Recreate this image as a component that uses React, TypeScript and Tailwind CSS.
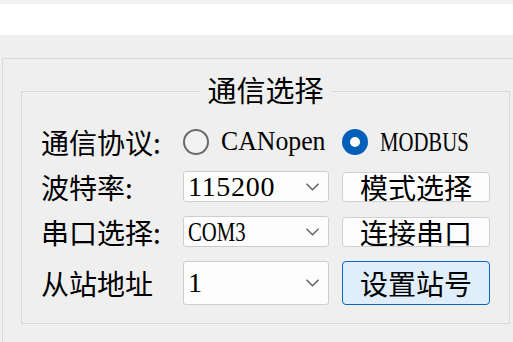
const cjk = "font-['Noto_Sans_CJK_SC',sans-serif]";
const latin = "font-['Liberation_Serif','Noto_Sans_CJK_SC',serif]";

function Radio({ checked }: { checked: boolean }) {
  if (checked) {
    return (
      <span className="flex h-[26px] w-[26px] shrink-0 items-center justify-center rounded-full bg-[#005fb8]">
        <span className="h-[10px] w-[10px] rounded-full bg-white" />
      </span>
    );
  }
  return <span className="h-[26px] w-[26px] shrink-0 rounded-full border-2 border-[#6a6a6a] bg-[#f2f2f2]" />;
}

function Chevron() {
  return (
    <svg width="13" height="8" viewBox="0 0 13 8" fill="none" className="shrink-0">
      <path d="M0.5 0.8 L6.5 6.8 L12.5 0.8" stroke="#5c5c5c" strokeWidth="1.3" />
    </svg>
  );
}

function Select({ value, fit, tall }: { value: string; fit: string; tall?: boolean }) {
  return (
    <div
      className={`flex w-[146px] shrink-0 items-center justify-between rounded-[3px] border border-[#cdcdcd] bg-[#fdfdfd] pl-[4px] pr-[9px] ${tall ? "h-[44px]" : "h-[31px]"}`}
    >
      <span className={`inline-block origin-left ${latin} text-[28px] leading-none text-black ${fit}`}>{value}</span>
      <Chevron />
    </div>
  );
}

function Button({ label, primary, tall }: { label: string; primary?: boolean; tall?: boolean }) {
  return (
    <button
      className={`ml-[13px] flex w-[148px] shrink-0 items-center justify-center rounded-[4px] border ${cjk} text-[28px] leading-none text-black ${
        primary ? "border-[#0067c0] bg-[#e0eef9]" : "border-[#d0d0d0] bg-[#fdfdfd]"
      } ${tall ? "h-[44px]" : "h-[30px]"}`}
    >
      {label}
    </button>
  );
}

function Label({ text }: { text: string }) {
  return <span className={`w-[142px] shrink-0 ${cjk} text-[28px] leading-none text-black`}>{text}</span>;
}

export default function App() {
  return (
    <div className="h-[342px] w-[513px] overflow-hidden bg-[#efefef]">
      <div className="h-[4px] bg-[#f2f2f2]" />
      <div className="h-[31px] bg-white" />

      <div className="pt-[23px]">
        {/* outer group box, runs past the window edge */}
        <div className="ml-[2px] h-[400px] w-[560px] border border-[#d9d9d9] pl-[18px] pt-[32px]">
          {/* inner group box */}
          <div className="relative h-[233px] w-[489px] border border-[#d9d9d9] pl-[19px] pt-[34px]">
            <span
              className={`absolute left-1/2 top-[-19px] -translate-x-1/2 bg-[#efefef] px-[8px] ${cjk} text-[29px] leading-[32px] text-black`}
            >
              通信选择
            </span>

            <div className="flex h-[31px] items-center">
              <Label text="通信协议:" />
              <Radio checked={false} />
              <span className="ml-[12px] w-[121px] shrink-0">
                <span
                  className={`inline-block origin-left [transform:scaleX(0.92)] ${latin} text-[28px] leading-none text-black`}
                >
                  CANopen
                </span>
              </span>
              <Radio checked />
              <span
                className={`ml-[12px] inline-block origin-left [transform:scaleX(0.74)] ${latin} text-[28px] leading-none text-black`}
              >
                MODBUS
              </span>
            </div>

            <div className="mt-[14px] flex h-[31px] items-center">
              <Label text="波特率:" />
              <Select value="115200" fit="tracking-[0.7px]" />
              <Button label="模式选择" />
            </div>

            <div className="mt-[14px] flex h-[31px] items-center">
              <Label text="串口选择:" />
              <Select value="COM3" fit="[transform:scaleX(0.74)]" />
              <Button label="连接串口" />
            </div>

            <div className="mt-[14px] flex h-[44px] items-center">
              <Label text="从站地址" />
              <Select value="1" fit="" tall />
              <Button label="设置站号" primary tall />
            </div>
          </div>
        </div>
      </div>
    </div>
  );
}
